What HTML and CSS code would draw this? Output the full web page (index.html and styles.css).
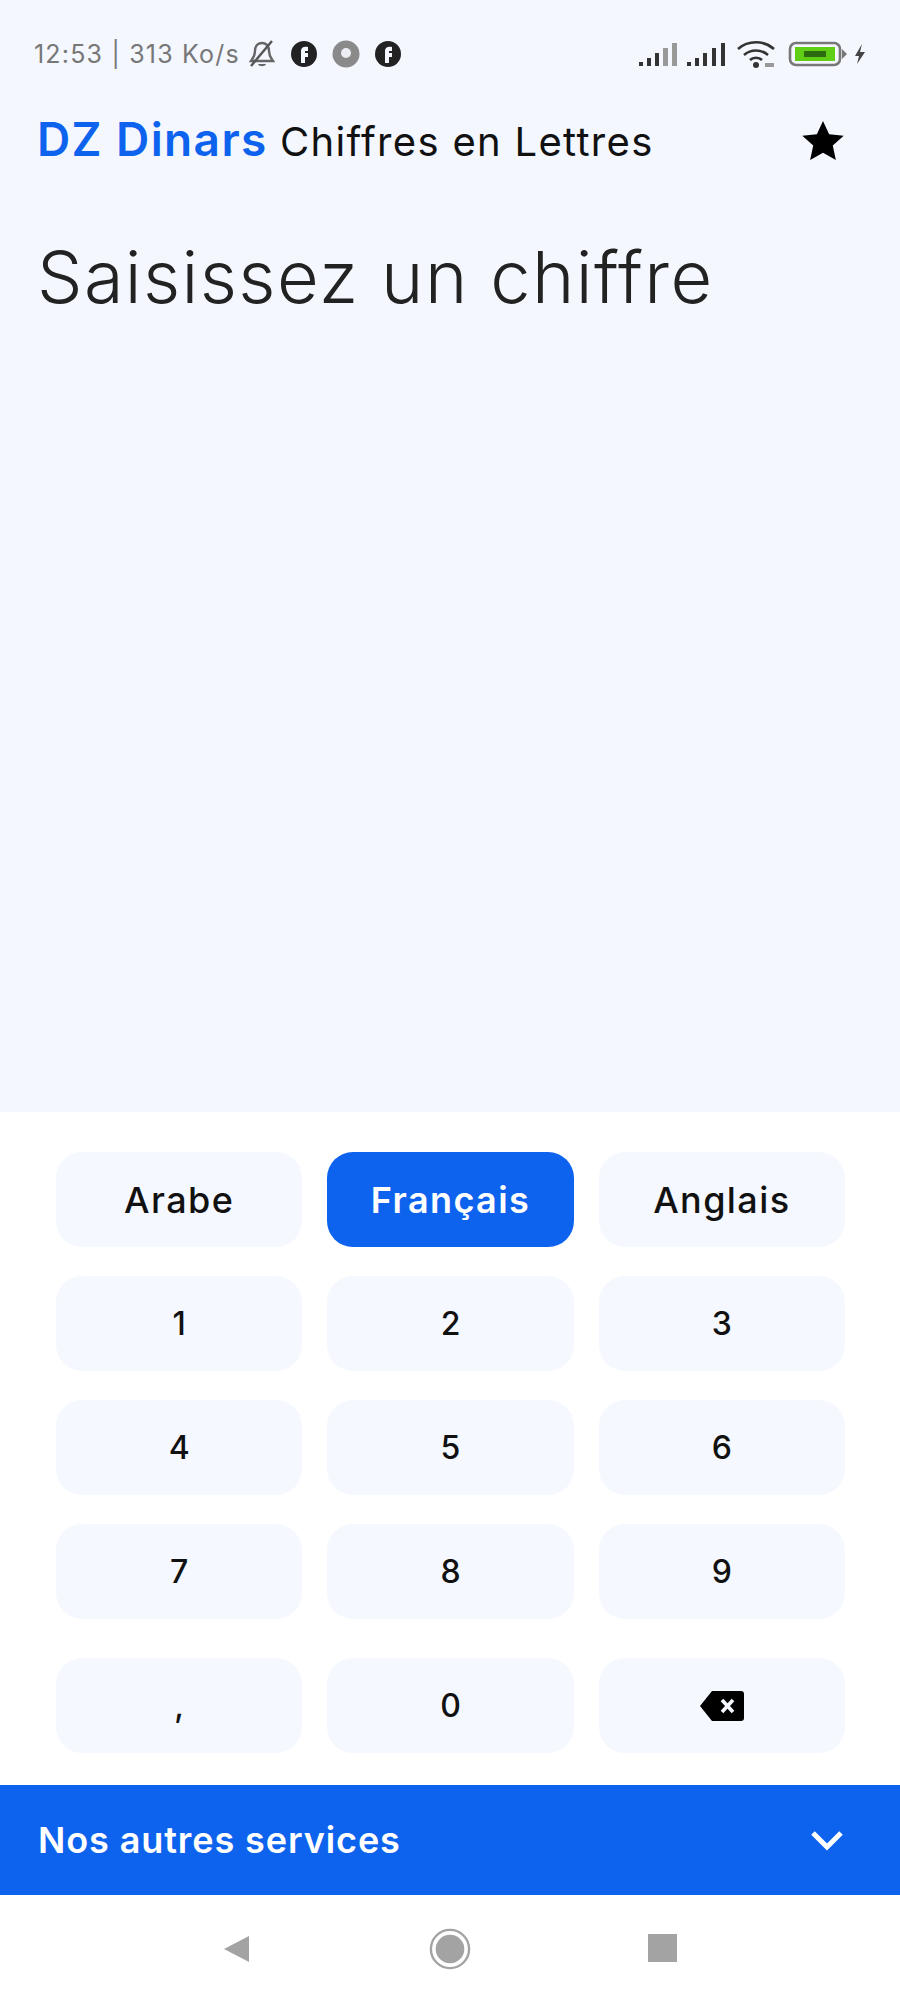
FILE: index.html
```html
<!DOCTYPE html>
<html lang="fr">
<head>
    <meta charset="UTF-8">
    <meta name="viewport" content="width=device-width, initial-scale=1.0">
    <title>DZ Dinars - Chiffres en Lettres</title>
    <link rel="stylesheet" href="styles.css">
</head>
<body>
    <div class="screen">
        <div class="top">
            <div class="status-bar">
                <div class="status-left">
                    <span class="status-text">12:53 | 313 Ko/s</span>
                    <svg class="status-icon" viewBox="0 0 30 30"><path d="M15 4c-5 0-7 4-7 8 0 5-2 7-4 10h22c-2-3-4-5-4-10 0-4-2-8-7-8z" fill="none" stroke="#666" stroke-width="2.4"/><path d="M11 25c1 3 7 3 8 0z" fill="#666"/><path d="M25 2 4 27" stroke="#555" stroke-width="2.4"/></svg>
                    <svg class="status-icon" viewBox="0 0 30 30"><circle cx="15" cy="15" r="13" fill="#222"/><path d="M12 24V12c0-3 2-5 7-4v4h-3v2h3v4h-3v6z" fill="#f4f7fe"/></svg>
                    <svg class="status-icon" viewBox="0 0 30 30"><circle cx="15" cy="15" r="13.5" fill="#8a8a8a"/><circle cx="15" cy="14" r="5" fill="#eceef4"/></svg>
                    <svg class="status-icon" viewBox="0 0 30 30"><circle cx="15" cy="15" r="13" fill="#222"/><path d="M12 24V12c0-3 2-5 7-4v4h-3v2h3v4h-3v6z" fill="#f4f7fe"/></svg>
                </div>
                <div class="status-right">
                    <svg class="signal" viewBox="0 0 42 26"><g fill="#333"><rect x="0" y="21" width="4" height="4"/><rect x="8" y="17" width="4" height="8"/><rect x="16" y="12" width="4" height="13"/></g><g fill="#999"><rect x="24" y="7" width="5" height="18"/><rect x="33" y="2" width="5" height="23"/></g></svg>
                    <svg class="signal" viewBox="0 0 42 26"><g fill="#333"><rect x="0" y="21" width="4" height="4"/><rect x="8" y="17" width="4" height="8"/><rect x="16" y="12" width="4" height="13"/><rect x="25" y="7" width="4" height="18"/><rect x="34" y="2" width="4" height="23"/></g></svg>
                    <svg class="wifi" viewBox="0 0 40 30"><g fill="none" stroke="#333" stroke-width="2.6"><path d="M2 10c10-9 26-9 36 0"/><path d="M8 16c7-6 17-6 24 0"/><path d="M14 21c3-3 9-3 12 0"/></g><circle cx="20" cy="26" r="3" fill="#333"/><rect x="29" y="24" width="9" height="4" fill="#999"/></svg>
                    <svg class="battery" viewBox="0 0 60 28"><rect x="2" y="3" width="50" height="22" rx="6" fill="none" stroke="#777" stroke-width="2.6"/><rect x="7" y="7" width="40" height="14" fill="#5fce14"/><rect x="16" y="11" width="22" height="6" fill="#2c6a10"/><path d="M54 9l5 5-5 5z" fill="#777"/></svg>
                    <svg class="bolt" viewBox="0 0 14 22"><path d="M9 1 2 13h4l-2 8 8-12H7z" fill="#444"/></svg>
                </div>
            </div>
            <header class="app-bar">
                <h1 class="app-title"><span class="brand">DZ Dinars</span> <span class="subtitle">Chiffres en Lettres</span></h1>
                <svg class="star" viewBox="0 0 24 24"><path d="M12 1.500l3.200 7 7.600.8-5.700 5.100 1.600 7.500L12 18.100l-6.700 3.800 1.600-7.500L1.200 9.300l7.600-.8z" fill="#000"/></svg>
            </header>
            <div class="display">Saisissez un chiffre</div>
        </div>

        <div class="keypad">
            <div class="key-row">
                <button class="key lang">Arabe</button>
                <button class="key lang active">Français</button>
                <button class="key lang">Anglais</button>
            </div>
            <div class="key-row">
                <button class="key">1</button>
                <button class="key">2</button>
                <button class="key">3</button>
            </div>
            <div class="key-row">
                <button class="key">4</button>
                <button class="key">5</button>
                <button class="key">6</button>
            </div>
            <div class="key-row">
                <button class="key">7</button>
                <button class="key">8</button>
                <button class="key">9</button>
            </div>
            <div class="key-row last">
                <button class="key">,</button>
                <button class="key">0</button>
                <button class="key">
                    <svg class="backspace" viewBox="0 0 46 32"><path d="M13 1h29a3 3 0 0 1 3 3v24a3 3 0 0 1-3 3H13L1 16z" fill="#000"/><path d="M23 10l11 12M34 10 23 22" stroke="#f4f7fe" stroke-width="3.6"/></svg>
                </button>
            </div>
        </div>

        <div class="services">
            <span>Nos autres services</span>
            <svg class="chevron" viewBox="0 0 36 24"><path d="M4 5l14 14L32 5" fill="none" stroke="#fff" stroke-width="5"/></svg>
        </div>

        <nav class="nav-bar">
            <svg class="nav-icon" viewBox="0 0 30 30"><path d="M27 2v26L2 15z" fill="#a3a3a3"/></svg>
            <svg class="nav-icon" viewBox="0 0 44 44"><circle cx="22" cy="22" r="20" fill="none" stroke="#a3a3a3" stroke-width="2.5"/><circle cx="22" cy="22" r="15" fill="#a3a3a3"/></svg>
            <svg class="nav-icon" viewBox="0 0 30 30"><rect x="0" y="0" width="29" height="28" fill="#a3a3a3"/></svg>
        </nav>
    </div>
</body>
</html>
```

FILE: styles.css
```css
html, body {
    margin: 0;
    padding: 0;
}

body {
    background: white;
    font-family: "Inter", "Liberation Sans", sans-serif;
    color: #000;
}

.screen {
    width: 900px;
    height: 2003px;
    display: flex;
    flex-direction: column;
}

.top {
    height: 1112px;
    background: #f4f7fe;
    box-sizing: border-box;
    padding-top: 36px;
}

.status-bar {
    display: flex;
    justify-content: space-between;
    align-items: center;
    height: 36px;
    padding: 0 33px 0 34px;
}

.status-left, .status-right {
    display: flex;
    align-items: center;
}

.status-text {
    font-size: 25px;
    color: #777;
    margin-right: 7px;
    letter-spacing: 1.2px;
}

.status-icon {
    width: 30px;
    height: 30px;
    margin-right: 12px;
}

.signal {
    width: 42px;
    height: 26px;
    margin-right: 6px;
}

.wifi {
    width: 40px;
    height: 30px;
    margin: 0 12px 0 1px;
}

.battery {
    width: 60px;
    height: 28px;
    margin-right: 5px;
}

.bolt {
    width: 14px;
    height: 22px;
}

.app-bar {
    display: flex;
    justify-content: space-between;
    align-items: center;
    padding: 37px 54px 0 37px;
}

.app-title {
    margin: 0;
    font-size: 40px;
    line-height: 60px;
    font-weight: 400;
}

.brand {
    color: #0d63ee;
    font-size: 46px;
    font-weight: 600;
    letter-spacing: 1.4px;
}

.subtitle {
    color: #111;
    font-weight: 400;
    letter-spacing: 1.3px;
    margin-left: 1px;
}

.star {
    width: 46px;
    height: 46px;
}

.display {
    margin-top: 57px;
    padding-left: 37px;
    font-size: 72px;
    line-height: 96px;
    font-weight: 300;
    letter-spacing: 1.4px;
    color: #222;
}

.keypad {
    height: 673px;
    box-sizing: border-box;
    padding: 40px 55px 0 56px;
    background: white;
}

.key-row {
    display: grid;
    grid-template-columns: repeat(3, 1fr);
    gap: 25px;
    margin-bottom: 29px;
}

.key-row.last {
    margin-top: 39px;
}

.key {
    height: 95px;
    border: none;
    border-radius: 26px;
    background: #f5f8fe;
    font-family: inherit;
    font-size: 32px;
    font-weight: 500;
    color: #111;
    display: flex;
    align-items: center;
    justify-content: center;
}

.key.lang {
    font-size: 36px;
    letter-spacing: 1.4px;
}

.key.active {
    background: #0d63ee;
    color: white;
    font-weight: 600;
}

.backspace {
    width: 46px;
    height: 32px;
}

.services {
    height: 110px;
    flex-shrink: 0;
    background: #0d63ee;
    color: white;
    font-size: 36px;
    font-weight: 600;
    letter-spacing: 0.9px;
    display: flex;
    justify-content: space-between;
    align-items: center;
    padding: 0 55px 0 38px;
}

.chevron {
    width: 36px;
    height: 24px;
}

.nav-bar {
    flex: 1;
    display: flex;
    align-items: center;
    justify-content: center;
    gap: 177px;
    background: white;
}

.nav-icon {
    width: 30px;
    height: 30px;
}

.nav-icon:nth-child(2) {
    width: 42px;
    height: 42px;
}
```
